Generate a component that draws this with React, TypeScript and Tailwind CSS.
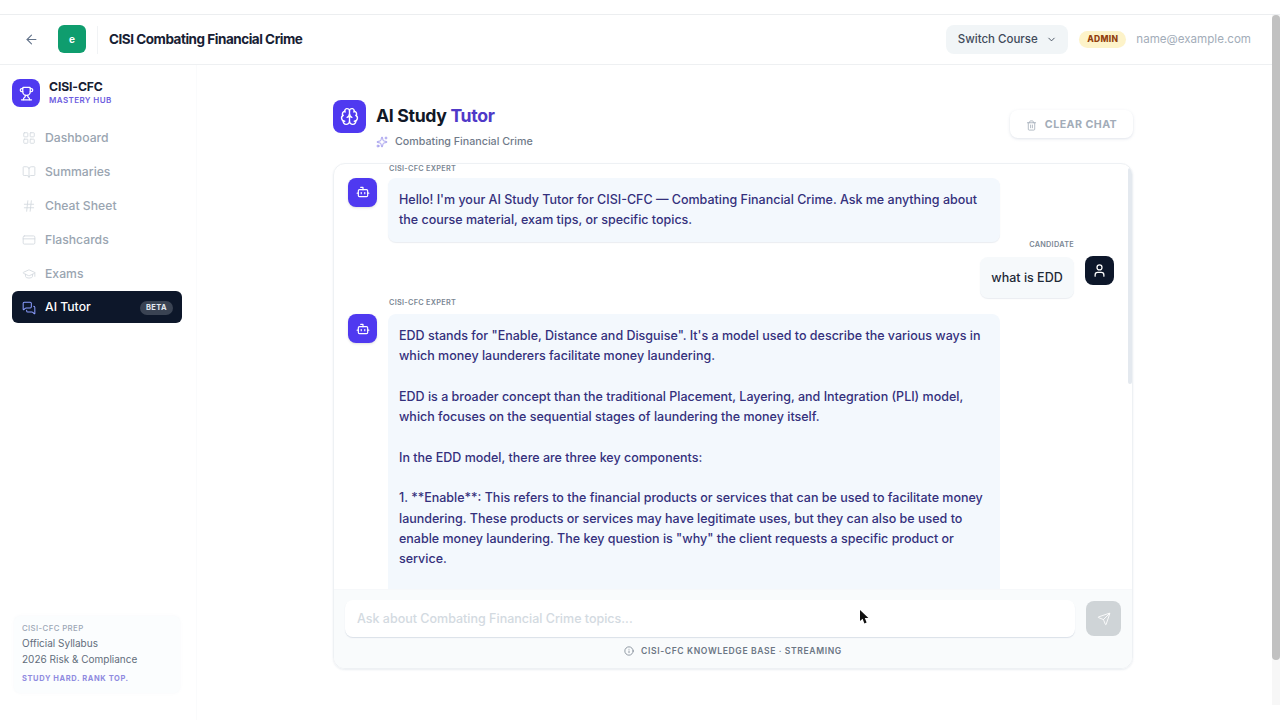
import {
  ArrowLeft,
  Bot,
  Brain,
  BookOpen,
  ChevronDown,
  CreditCard,
  GraduationCap,
  Hash,
  Info,
  LayoutGrid,
  MessagesSquare,
  Send,
  Sparkles,
  Trash2,
  Trophy,
  User,
} from "lucide-react";

const navItems = [
  { label: "Dashboard", icon: LayoutGrid },
  { label: "Summaries", icon: BookOpen },
  { label: "Cheat Sheet", icon: Hash },
  { label: "Flashcards", icon: CreditCard },
  { label: "Exams", icon: GraduationCap },
];

function BotAvatar() {
  return (
    <div className="flex size-[29px] shrink-0 items-center justify-center rounded-lg bg-[#4f39f0] shadow-sm">
      <Bot className="size-[14px] text-white" strokeWidth={2} />
    </div>
  );
}

function ExpertLabel() {
  return <div className="pl-[41px] text-[7.3px] font-semibold leading-[10px] tracking-[0.04em] text-[#7b8794]">CISI-CFC EXPERT</div>;
}

export default function App() {
  return (
    <div className="relative flex h-screen flex-col overflow-hidden bg-white font-['Inter',sans-serif]">
      <div className="h-[15px] shrink-0 border-b border-[#eceef0]" />
      <div className="flex min-h-0 flex-1">
        <div className="flex min-w-0 flex-1 flex-col">
          <header className="flex h-[50px] shrink-0 items-center border-b border-[#eef0f2] pl-6 pr-[21px]">
            <ArrowLeft className="size-[15px] text-[#64748b]" strokeWidth={1.75} />
            <div className="ml-[19px] mt-[-1px] flex size-[28px] items-center justify-center rounded-md bg-[#0f9d6e] text-[10px] font-bold text-white">e</div>
            <div className="ml-[11px] h-[28px] w-px bg-[#f1f3f5]" />
            <div className="ml-[11px] text-[13.5px] font-bold tracking-[-0.035em] text-[#172033]">CISI Combating Financial Crime</div>
            <div className="ml-auto mt-[-1px] flex h-[29px] w-[122px] items-center justify-center gap-[8px] rounded-lg bg-[#f1f5f7] pt-[1px] text-[11.5px] font-medium text-[#3f4a5a]">
              Switch Course
              <ChevronDown className="size-[11px]" />
            </div>
            <div className="ml-[11px] flex h-[17px] w-[47px] items-center justify-center rounded-full bg-[#fdf3c9] text-[8.5px] font-extrabold tracking-[0.03em] text-[#92400e]">ADMIN</div>
            <div className="ml-[10px] text-[11.6px] text-[#a3adb9]">name@example.com</div>
          </header>

          <div className="flex min-h-0 flex-1">
            <aside className="flex w-[197px] shrink-0 flex-col border-r border-[#fafbfc] px-3 pb-[27px] pt-[14px]">
              <div className="flex items-center gap-[9px]">
                <div className="flex size-[28px] items-center justify-center rounded-lg bg-[#4f39f0]">
                  <Trophy className="size-[15px] text-white" strokeWidth={2} />
                </div>
                <div>
                  <div className="mt-[-1px] text-[12.2px] font-bold leading-[15px] tracking-[-0.01em] text-[#172033]">CISI-CFC</div>
                  <div className="mt-[1px] text-[8px] font-semibold leading-[11px] tracking-[0.05em] text-[#6d5ce0]">MASTERY HUB</div>
                </div>
              </div>

              <nav className="mt-[14px] flex w-[170px] flex-col gap-[2px]">
                {navItems.map((item) => (
                  <div key={item.label} className="flex h-[32px] items-center gap-[9px] pl-[10px] pt-[2px] text-[12.2px] font-medium text-[#9aa5b1]">
                    <item.icon className="size-[14px] text-[#d3d9df]" strokeWidth={1.5} />
                    {item.label}
                  </div>
                ))}
                <div className="flex h-[32px] items-center gap-[9px] rounded-md bg-[#0d172a] pl-[10px] pr-[9px] pt-[1px] text-[12.2px] font-medium text-white">
                  <MessagesSquare className="size-[14px] text-[#8b9dff]" strokeWidth={1.75} />
                  AI Tutor
                  <div className="ml-auto flex h-[14px] w-[33px] items-center justify-center rounded-full bg-[#3a4353] text-[7.5px] font-bold tracking-[0.05em] text-[#e2e8f0]">BETA</div>
                </div>
              </nav>

              <div className="mt-auto ml-[2px] w-[166px] rounded-md bg-[#fbfdfe] px-2 pb-[9px] pt-[7px] shadow-[0_0_3px_rgba(226,232,240,0.3)]">
                <div className="text-[7.8px] font-medium leading-[10px] tracking-[0.05em] text-[#9ca6b5]">CISI-CFC PREP</div>
                <div className="mt-[3px] text-[10px] leading-[15.5px] text-[#626d7b]">Official Syllabus</div>
                <div className="text-[10px] leading-[15.5px] text-[#626d7b]">2026 Risk &amp; Compliance</div>
                <div className="mt-[7px] text-[7.5px] font-bold leading-[10px] tracking-[0.08em] text-[#8f8be0]">STUDY HARD. RANK TOP.</div>
              </div>
            </aside>

            <main className="min-w-0 flex-1 pb-[51px] pl-[136px] pt-[35px]">
              <div className="flex h-full w-[800px] flex-col">
                <div className="flex h-[63px] shrink-0 items-start">
                  <div className="flex size-[33px] items-center justify-center rounded-lg bg-[#4f39f0]">
                    <Brain className="size-[19px] text-white" strokeWidth={1.75} />
                  </div>
                  <div className="ml-[10px]">
                    <div className="text-[17.7px] font-bold leading-[32px] tracking-[-0.02em] text-[#111827]">
                      AI Study <span className="text-[#4f39c8]">Tutor</span>
                    </div>
                    <div className="mt-[3px] flex items-center gap-[7px] text-[10.7px] font-medium leading-[14px] text-[#6f7a89]">
                      <Sparkles className="size-[12px] text-[#8c84e8]" strokeWidth={1.5} />
                      Combating Financial Crime
                    </div>
                  </div>
                  <div className="ml-auto mt-[10px] flex h-[28px] w-[123px] items-center justify-center gap-[8px] rounded-lg bg-white pt-[2px] text-[10.7px] font-bold tracking-[0.04em] text-[#a2acb8] shadow-[0_1px_3px_rgba(148,163,184,0.3)]">
                    <Trash2 className="size-[11px]" strokeWidth={1.75} />
                    CLEAR CHAT
                  </div>
                </div>

                <div className="flex min-h-0 flex-1 flex-col overflow-hidden rounded-xl border border-[#eef1f4] shadow-[0_1px_2px_rgba(148,163,184,0.2)]">
                  <div className="relative min-h-0 flex-1 overflow-hidden pl-[14px] pr-[18px]">
                    <div className="absolute right-0 top-[4px] h-[216px] w-[4px] rounded-full bg-[#e4e9ef]" />
                    <div className="pl-[41px] pt-[1px] text-[7.3px] font-semibold leading-[7px] tracking-[0.04em] text-[#7b8794]">CISI-CFC EXPERT</div>
                    <div className="mt-[5.5px] flex items-start gap-[11px]">
                      <BotAvatar />
                      <div className="h-[64px] w-[612px] rounded-lg bg-[#f3f8fd] px-[11px] pt-[12.5px] text-[12.5px] font-medium leading-[20.3px] text-[#34307c] shadow-[0_1px_1px_rgba(148,163,184,0.2)]">
                        Hello! I'm your AI Study Tutor for CISI-CFC — Combating Financial Crime. Ask me anything about the course material, exam tips, or specific topics.
                      </div>
                    </div>

                    <div className="mt-[-2px] flex justify-end gap-[11px]">
                      <div className="flex flex-col items-end">
                        <div className="text-[7.3px] font-semibold leading-[10px] tracking-[0.04em] text-[#7b8794]">CANDIDATE</div>
                        <div className="mt-[7px] flex h-[41px] w-[94px] items-center justify-center rounded-lg bg-[#f6f9fb] pt-[2px] text-[12.5px] font-medium text-[#1f2937] shadow-[0_1px_1px_rgba(148,163,184,0.2)]">what is EDD</div>
                      </div>
                      <div className="mt-[16.5px] flex size-[29px] items-center justify-center rounded-lg bg-[#0d172a]">
                        <User className="size-[15px] text-white" strokeWidth={2} />
                      </div>
                    </div>

                    <ExpertLabel />
                    <div className="mt-[6.5px] flex items-start gap-[11px]">
                      <BotAvatar />
                      <div className="h-[400px] w-[612px] whitespace-pre-line rounded-lg bg-[#f3f8fd] px-[11px] pt-[12px] text-[12.5px] font-medium leading-[20.3px] text-[#34307c]">
                        {`EDD stands for "Enable, Distance and Disguise". It's a model used to describe the various ways in which money launderers facilitate money laundering.

EDD is a broader concept than the traditional Placement, Layering, and Integration (PLI) model, which focuses on the sequential stages of laundering the money itself.

In the EDD model, there are three key components:

1. **Enable**: This refers to the financial products or services that can be used to facilitate money laundering. These products or services may have legitimate uses, but they can also be used to enable money laundering. The key question is "why" the client requests a specific product or service.`}
                      </div>
                    </div>
                  </div>

                  <div className="h-[79px] shrink-0 border-t border-[#f6f8fa] bg-[#f9fbfc] px-[11px] pt-[10px]">
                    <div className="flex items-center gap-[11px]">
                      <div className="flex h-[37px] w-[730px] items-center rounded-lg bg-white pl-[12px] pt-[1px] text-[12.5px] font-medium text-[#d3dae1] shadow-[0_1px_1px_rgba(148,163,184,0.3)]">
                        Ask about Combating Financial Crime topics...
                      </div>
                      <div className="flex size-[35px] items-center justify-center rounded-lg bg-[#cfd4d7]">
                        <Send className="size-[14px] text-white" strokeWidth={1.5} />
                      </div>
                    </div>
                    <div className="mt-[8px] flex items-center justify-center gap-[7px] text-[8.6px] font-semibold tracking-[0.07em] text-[#6b7684]">
                      <Info className="size-[10px]" strokeWidth={1.75} />
                      CISI-CFC KNOWLEDGE BASE · STREAMING
                    </div>
                  </div>
                </div>
              </div>
            </main>
          </div>
        </div>

        <div className="mb-[15px] w-[8px] shrink-0 bg-[#f7f7f7]">
          <div className="h-[645px] rounded-full bg-[#c1c1c1]" />
        </div>
      </div>

      <svg className="absolute left-[859px] top-[610px] h-[15px] w-[11px]" viewBox="0 0 11 15" aria-hidden="true">
        <path d="M1 0 L1 11 L3.6 8.8 L5.4 13.5 L7.6 12.6 L5.8 8 L9.4 8 Z" fill="#111" />
      </svg>
    </div>
  );
}
